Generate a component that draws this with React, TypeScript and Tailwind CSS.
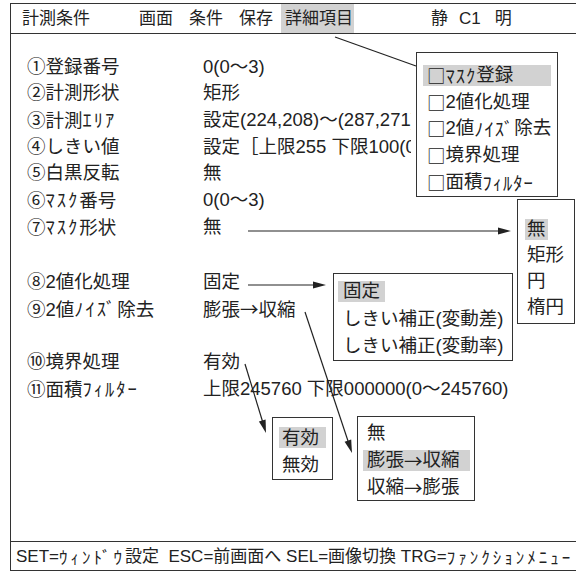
import React from 'react';

const HL = 'bg-[#d2d2d2]';
const CJK = "font-['Noto_Sans_CJK_JP',sans-serif]";

// half-width katakana get extra spacing, box and arrow glyphs come from the CJK font
const fmt = (s: string, track: string) =>
  s.split(/([\uFF61-\uFF9F]+|[□→])/).filter(Boolean).map((p, i) => {
    if (/^[\uFF61-\uFF9F]+$/.test(p)) return <span key={i} className={`${CJK} ${track}`}>{p}</span>;
    if (p === '□' || p === '→') return <span key={i} className={CJK}>{p}</span>;
    return <React.Fragment key={i}>{p}</React.Fragment>;
  });

const ROWS: [string, string][] = [
  ['①登録番号', '0(0〜3)'],
  ['②計測形状', '矩形'],
  ['③計測ｴﾘｱ', '設定(224,208)〜(287,271)'],
  ['④しきい値', '設定［上限255 下限100(0〜255)］'],
  ['⑤白黒反転', '無'],
  ['⑥ﾏｽｸ番号', '0(0〜3)'],
  ['⑦ﾏｽｸ形状', '無'],
];

const Row: React.FC<{ label: string; value: string; clip?: boolean; className?: string }> = ({ label, value, clip, className }) => (
  <div className={`flex items-center h-[26.7px] leading-none whitespace-nowrap ${className ?? ''}`}>
    <span className="w-[176px] shrink-0">{fmt(label, 'tracking-[2px]')}</span>
    <span className={clip ? 'block max-w-[208px] h-[26.7px] leading-[26.7px] overflow-hidden' : ''}>{fmt(value, 'tracking-[2px]')}</span>
  </div>
);

const Arrows: React.FC = () => (
  <svg className="absolute inset-0 pointer-events-none" width="576" height="572" viewBox="0 0 576 572">
    <g stroke="#222" strokeWidth="1.2" fill="none">
      <line x1="335" y1="37" x2="416" y2="66" />
      <line x1="248" y1="231" x2="500" y2="231" />
      <line x1="248" y1="285" x2="315" y2="285" />
      <line x1="305" y1="312" x2="349" y2="444" />
      <line x1="245" y1="364" x2="263" y2="423" />
    </g>
    <g fill="#222">
      <polygon points="511,231 498,227.5 498,234.5" />
      <polygon points="326,285 313,281.5 313,288.5" />
      <polygon points="352,453 344.6,441.8 351.2,439.6" />
      <polygon points="266,433 258.9,421.6 265.6,419.6" />
    </g>
  </svg>
);

const App: React.FC = () => {
  return (
    <div className="relative w-[576px] h-[572px] overflow-hidden bg-white text-[#222] font-['Liberation_Sans','Noto_Sans_CJK_JP',sans-serif]">
      {/* screen frame */}
      <div className="ml-[10px] mt-[3px] w-[570px] h-[568px] border border-[#333] flex flex-col">
        {/* header */}
        <div className="h-[30px] shrink-0 border-b border-[#333] flex items-stretch text-[17px] leading-none whitespace-nowrap">
          <span className="ml-[11px] flex items-center">計測条件</span>
          <span className="ml-[49px] flex items-center">画面</span>
          <span className="ml-[16px] flex items-center">条件</span>
          <span className="ml-[16px] flex items-center">保存</span>
          <span className={`ml-[8px] w-[73px] pl-[4px] flex items-center ${HL}`}>詳細項目</span>
          <span className="ml-[77px] flex items-center">静</span>
          <span className="ml-[11px] flex items-center">C1</span>
          <span className="ml-[14px] flex items-center">明</span>
        </div>

        {/* body */}
        <div className="flex-1 pl-[16px] pt-[19.5px] text-[18.5px]">
          {ROWS.map(([l, v]) => (
            <Row key={l} label={l} value={v} clip />
          ))}
          <Row label="⑧2値化処理" value="固定" className="mt-[29px]" />
          <Row label="⑨2値ﾉｲｽﾞ除去" value="膨張→収縮" />
          <Row label="⑩境界処理" value="有効" className="mt-[26.6px]" />
          <Row label="⑪面積ﾌｨﾙﾀｰ" value="上限245760 下限000000(0〜245760)" />
        </div>

        {/* footer */}
        <div className="h-[29px] shrink-0 border-t border-[#333] flex items-center pl-[5px] text-[17px] leading-none whitespace-pre">
          {fmt('SET=ｳｨﾝﾄﾞｳ設定  ESC=前画面へ SEL=画像切換 TRG=ﾌｧﾝｸｼｮﾝﾒﾆｭｰ', 'tracking-[3px]')}
        </div>
      </div>

      {/* detail item menu */}
      <div className="absolute left-[416px] top-[52px] w-[142px] h-[145px] border border-[#333] bg-white pt-[9px] px-[6px] text-[18.5px] leading-none whitespace-nowrap">
        {['□ﾏｽｸ登録', '□2値化処理', '□2値ﾉｲｽﾞ除去', '□境界処理', '□面積ﾌｨﾙﾀｰ'].map((t, i) => (
          <div key={t} className="h-[26.7px] flex items-center">
            <span className={`h-[21px] w-full flex items-center pl-[4px] ${i === 0 ? HL : ''}`}>{fmt(t, 'tracking-[1px]')}</span>
          </div>
        ))}
      </div>

      {/* mask shape menu */}
      <div className="absolute left-[517px] top-[199px] w-[58px] h-[125px] border border-[#333] bg-white pt-[16px] pl-[7px] text-[18.5px] leading-none whitespace-nowrap">
        {['無', '矩形', '円', '楕円'].map((t, i) => (
          <div key={t} className="h-[26.2px] flex items-center">
            <span className={`h-[21px] flex items-center px-[2px] ${i === 0 ? HL : ''}`}>{t}</span>
          </div>
        ))}
      </div>

      {/* binarize menu */}
      <div className="absolute left-[333px] top-[273px] w-[180px] h-[88px] border border-[#333] bg-white pt-[4px] pl-[4px] text-[18.5px] leading-none whitespace-nowrap">
        {['固定', 'しきい補正(変動差)', 'しきい補正(変動率)'].map((t, i) => (
          <div key={t} className="h-[27.3px] flex items-center">
            <span className={`h-[21px] flex items-center px-[5px] ${i === 0 ? HL : ''}`}>{t}</span>
          </div>
        ))}
      </div>

      {/* border processing menu */}
      <div className="absolute left-[272px] top-[417px] w-[61px] h-[63px] border border-[#333] bg-white pt-[6px] px-[6px] text-[18.5px] leading-none whitespace-nowrap">
        {['有効', '無効'].map((t, i) => (
          <div key={t} className="h-[27.5px] flex items-center">
            <span className={`h-[21px] w-full flex items-center pl-[3px] ${i === 0 ? HL : ''}`}>{t}</span>
          </div>
        ))}
      </div>

      {/* noise removal menu */}
      <div className="absolute left-[357px] top-[416px] w-[118px] h-[85px] border border-[#333] bg-white pt-[3px] pl-[5px] pr-[4px] text-[18.5px] leading-none whitespace-nowrap">
        {['無', '膨張→収縮', '収縮→膨張'].map((t, i) => (
          <div key={t} className="h-[27px] flex items-center">
            <span className={`h-[21px] w-full flex items-center pl-[4px] ${i === 1 ? HL : ''}`}>{fmt(t, '')}</span>
          </div>
        ))}
      </div>

      <Arrows />
    </div>
  );
};

export default App;
